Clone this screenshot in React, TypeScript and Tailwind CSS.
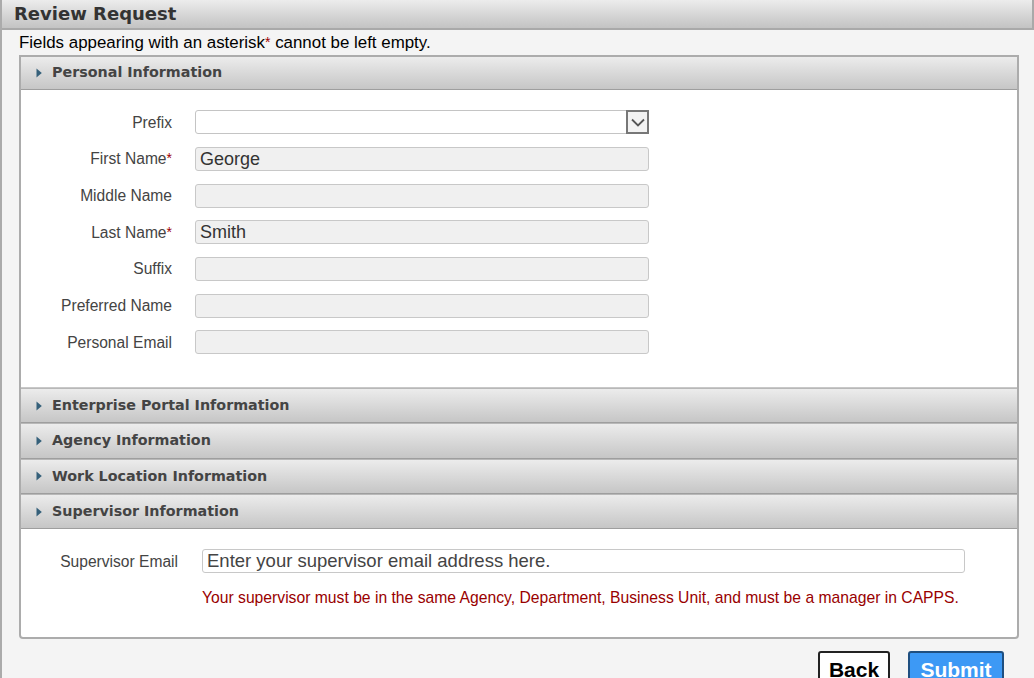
import React from "react";

function Caret() {
  return (
    <svg width="6" height="10" viewBox="0 0 6 10" className="shrink-0">
      <path d="M0.5 0.5 L5.8 5 L0.5 9.5 Z" fill="#35607a" />
    </svg>
  );
}

function SectionHeader({ title, first }: { title: string; first?: boolean }) {
  return (
    <div
      className={
        "flex items-center pl-[15px] gap-[10px] bg-gradient-to-b from-[#ececec] to-[#c6c6c6] border-b border-[#9e9e9e] " +
        (first ? "h-[33px]" : "h-[35.4px] border-t border-t-[#b8b8b8]")
      }
    >
      <Caret />
      <span className="font-['DejaVu_Sans',Verdana,sans-serif] font-bold text-[14.3px] text-[#444]">
        {title}
      </span>
    </div>
  );
}

function Row({
  label,
  required,
  value,
  select,
}: {
  label: string;
  required?: boolean;
  value?: string;
  select?: boolean;
}) {
  return (
    <div className="h-[36.7px] flex items-center">
      <div className="w-[151px] text-right text-[15.6px] text-[#444] leading-none">
        {label}
        {required && <span className="text-[#a00000] text-[14px] align-top">*</span>}
      </div>
      <div className="ml-[23px] w-[454px] h-[24px]">
        {select ? (
          <div className="h-full flex bg-white border border-[#c4c4c4] rounded-[3px]">
            <div className="flex-1" />
            <div className="w-[23px] h-[24px] -mt-[1px] -mr-[1px] border-2 border-[#777] bg-[#f2f2f2] flex items-center justify-center">
              <svg width="14" height="9" viewBox="0 0 14 9">
                <path d="M1 1.5 L7 7.5 L13 1.5" fill="none" stroke="#555" strokeWidth="1.8" />
              </svg>
            </div>
          </div>
        ) : (
          <div className="h-full bg-[#f0f0f0] border border-[#c8c8c8] rounded-[3px] flex items-center pl-[4px] text-[18px] text-[#333] leading-none">
            {value}
          </div>
        )}
      </div>
    </div>
  );
}

export default function App() {
  return (
    <div className="h-[678px] bg-[#f4f4f4] border-l-2 border-[#ababab] font-['Liberation_Sans',Arial,sans-serif] overflow-hidden">
      <div className="h-[30px] bg-gradient-to-b from-[#ececec] to-[#c3c3c3] border-b-2 border-r-2 border-[#a9a9a9] flex items-center pl-[12px]">
        <h1 className="font-['DejaVu_Sans',Verdana,sans-serif] font-bold text-[18px] text-[#333] leading-none">
          Review Request
        </h1>
      </div>
      <div className="pl-[17px] pr-[15px]">
        <p className="text-[16.9px] text-black h-[25px] leading-[25px]">
          Fields appearing with an asterisk
          <span className="text-[#a00000] text-[14px] align-top">*</span> cannot be left empty.
        </p>
        <div className="border-2 border-[#acacac] rounded-b-[4px] bg-white">
          <SectionHeader title="Personal Information" first />
          <div className="pt-[14px] pb-[26px] border-b border-[#c8c8c8]">
            <Row label="Prefix" select />
            <Row label="First Name" required value="George" />
            <Row label="Middle Name" />
            <Row label="Last Name" required value="Smith" />
            <Row label="Suffix" />
            <Row label="Preferred Name" />
            <Row label="Personal Email" />
          </div>
          <SectionHeader title="Enterprise Portal Information" />
          <SectionHeader title="Agency Information" />
          <SectionHeader title="Work Location Information" />
          <SectionHeader title="Supervisor Information" />
          <div className="pt-[20px] pb-[29px]">
            <div className="flex items-center">
              <div className="w-[157px] text-right text-[15.6px] text-[#444]">Supervisor Email</div>
              <div className="ml-[24px] w-[763px] h-[24px] bg-white border border-[#c8c8c8] rounded-[3px] flex items-center pl-[4px] text-[18.5px] text-[#444] leading-none">
                Enter your supervisor email address here.
              </div>
            </div>
            <p className="ml-[181px] mt-[15px] text-[15.7px] text-[#990000] leading-[20px]">
              Your supervisor must be in the same Agency, Department, Business Unit, and must be a manager in CAPPS.
            </p>
          </div>
        </div>
        <div className="flex justify-end gap-[18px] mt-[12px] pr-[15px]">
          <button className="w-[72px] h-[34px] bg-white border-2 border-[#222] rounded-[3px] text-[21px] font-bold text-black leading-none pt-[3px]">
            Back
          </button>
          <button className="w-[96px] h-[34px] bg-[#3d99f5] border-2 border-[#1f4f80] rounded-[3px] text-[21px] font-bold text-white leading-none pt-[3px]">
            Submit
          </button>
        </div>
      </div>
    </div>
  );
}
